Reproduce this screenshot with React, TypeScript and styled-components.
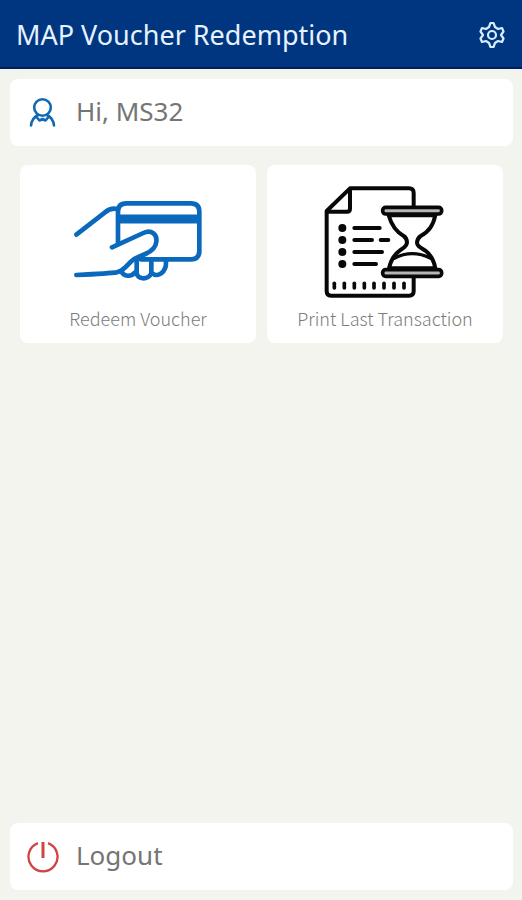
import React from 'react';
import styled, { createGlobalStyle } from 'styled-components';

const GlobalStyle = createGlobalStyle`
  * { box-sizing: border-box; }
  body {
    margin: 0;
    background: #f3f4ee;
    font-family: "Noto Sans", sans-serif;
  }
  button { font: inherit; border: 0; cursor: pointer; }
  svg { display: block; flex: none; }
`;

const Screen = styled.div`
  display: flex;
  flex-direction: column;
  min-height: 100vh;
`;

const Header = styled.header`
  display: flex;
  align-items: center;
  justify-content: space-between;
  height: 69px;
  padding: 4px 17px 2px 16px;
  background: #00367f;
  border-bottom: 2px solid #001c63;
`;

const Title = styled.h1`
  margin: 0;
  color: #e6f2ff;
  font-size: 27px;
  font-weight: 400;
  line-height: 40px;
`;

const IconButton = styled.button`
  padding: 0;
  background: none;
  color: #d8ecff;
`;

const Content = styled.main`
  display: flex;
  flex: 1;
  flex-direction: column;
  padding: 10px 9px 10px 10px;
`;

const Bar = styled.div`
  display: flex;
  align-items: center;
  gap: 16px;
  width: 100%;
  height: 67px;
  padding: 0 16px;
  border-radius: 8px;
  background: #fff;
  color: #757575;
  text-align: left;
`;

const BarText = styled.span`
  padding-bottom: 4px;
  font-size: 26px;
  line-height: 36px;
`;

const Tiles = styled.section`
  display: grid;
  grid-template-columns: 1fr 1fr;
  gap: 11px;
  padding: 19px 10px;
`;

const Tile = styled.button`
  display: flex;
  flex-direction: column;
  align-items: center;
  height: 178px;
  padding: 10px 0;
  border-radius: 8px;
  background: #fff;
  color: #7c7c7c;
`;

const TileIcon = styled.span`
  display: flex;
  align-items: center;
  height: 130px;
`;

const TileLabel = styled.span`
  font-family: "Noto Sans CJK SC", "Noto Sans", sans-serif;
  font-size: 18px;
  font-weight: 300;
  line-height: 26px;
`;

const Spacer = styled.div`
  flex: 1;
`;

const GearIcon = () => (
  <svg width="26" height="28" viewBox="0 0 26 28" fill="none" stroke="currentColor" strokeWidth="2.2" strokeLinejoin="round" aria-hidden="true">
    <path d="M11.500 2H14.500L16 6L19 8L23 7L24.500 10.500L22 14L24.500 17.500L23 21L19 20L16 22L14.500 26H11.500L10 22L7 20L3 21L1.500 17.500L4 14L1.500 10.500L3 7L7 8L10 6Z" />
    <circle cx="13" cy="14" r="4" />
  </svg>
);

const UserIcon = () => (
  <svg width="34" height="34" viewBox="0 0 34 34" fill="none" stroke="#1069b5" strokeWidth="2.6" strokeLinecap="round" strokeLinejoin="round" aria-hidden="true">
    <circle cx="16.500" cy="11.500" r="8.300" />
    <path d="M5 29.500C5.500 25 8 21 12 19M28 29.500C27.500 25 25 21 21 19" />
    <path d="M10.500 21L13.500 24.500L16.500 23L19.500 24.500L22.500 21" />
  </svg>
);

const PowerIcon = () => (
  <svg width="34" height="34" viewBox="0 0 34 34" fill="none" stroke="#cf4545" strokeWidth="2.3" aria-hidden="true">
    <path d="M12 3.200A14.500 14.500 0 1 0 22 3.200" />
    <path d="M17 2V18" strokeWidth="3" />
  </svg>
);

const CardInHandIcon = () => (
  <svg width="160" height="110" viewBox="-6 0 480 330" fill="none" stroke="#0b69bd" strokeWidth="14" strokeLinecap="round" strokeLinejoin="round" aria-hidden="true">
    <path d="M174 176V80Q174 55 199 55H393Q418 55 418 80V198Q418 223 393 223H242" />
    <path d="M178 102H414" strokeWidth="27" strokeLinecap="butt" />
    <path d="M49 149L135 82Q152 68 171 72" />
    <path d="M156 187L250 144C274 133 292 148 289 170C287 189 274 199 256 207L226 220C206 229 198 256 170 262Q150 265 49 270" />
    <path d="M185 260C192 275 213 276 223 264M230 226V262C230 285 266 286 274 264V229M276 264C291 280 320 263 318 229" />
  </svg>
);

const bullets = [159, 195, 231, 267];
const ticks = [74, 104, 134, 164, 193, 223, 253, 283];

const TransactionIcon = () => (
  <svg width="150" height="130" viewBox="1 0 450 390" fill="none" stroke="#080808" strokeWidth="12" strokeLinecap="round" strokeLinejoin="round" aria-hidden="true">
    <path d="M312 92V54Q312 40 298 40H121L51 108V349Q51 362 64 362H298Q312 362 312 349V308" />
    <path d="M121 43V101Q121 110 112 110H55" />
    {bullets.map((y) => (
      <circle key={y} cx="98" cy={y} r="12" fill="#080808" stroke="none" />
    ))}
    <path d="M134 159H210M134 195H187M213 195H236M134 231H217M134 267H199" />
    {ticks.map((x) => (
      <path key={x} d={`M${x} 325V339`} strokeWidth="11" />
    ))}
    <path d="M237 121C246 153 260 171 282 183Q292 190 292 203C291 215 282 218 270 227Q246 244 238 280H377Q371 245 347 227C332 217 322 213 322 203Q323 190 333 183C359 169 370 151 377 121Z" fill="#fff" />
    <path d="M254 250Q307 222 363 250" strokeWidth="10" />
    <rect x="219" y="97" width="177" height="20" rx="9" fill="#b5b5b5" strokeWidth="11" />
    <rect x="219" y="284" width="177" height="20" rx="9" fill="#b5b5b5" strokeWidth="11" />
  </svg>
);

export default function App() {
  return (
    <>
      <GlobalStyle />
      <Screen>
        <Header>
          <Title>MAP Voucher Redemption</Title>
          <IconButton type="button" aria-label="Settings">
            <GearIcon />
          </IconButton>
        </Header>
        <Content>
          <Bar>
            <UserIcon />
            <BarText>Hi, MS32</BarText>
          </Bar>
          <Tiles>
            <Tile type="button">
              <TileIcon>
                <CardInHandIcon />
              </TileIcon>
              <TileLabel>Redeem Voucher</TileLabel>
            </Tile>
            <Tile type="button">
              <TileIcon>
                <TransactionIcon />
              </TileIcon>
              <TileLabel>Print Last Transaction</TileLabel>
            </Tile>
          </Tiles>
          <Spacer />
          <Bar as="button" type="button">
            <PowerIcon />
            <BarText>Logout</BarText>
          </Bar>
        </Content>
      </Screen>
    </>
  );
}
